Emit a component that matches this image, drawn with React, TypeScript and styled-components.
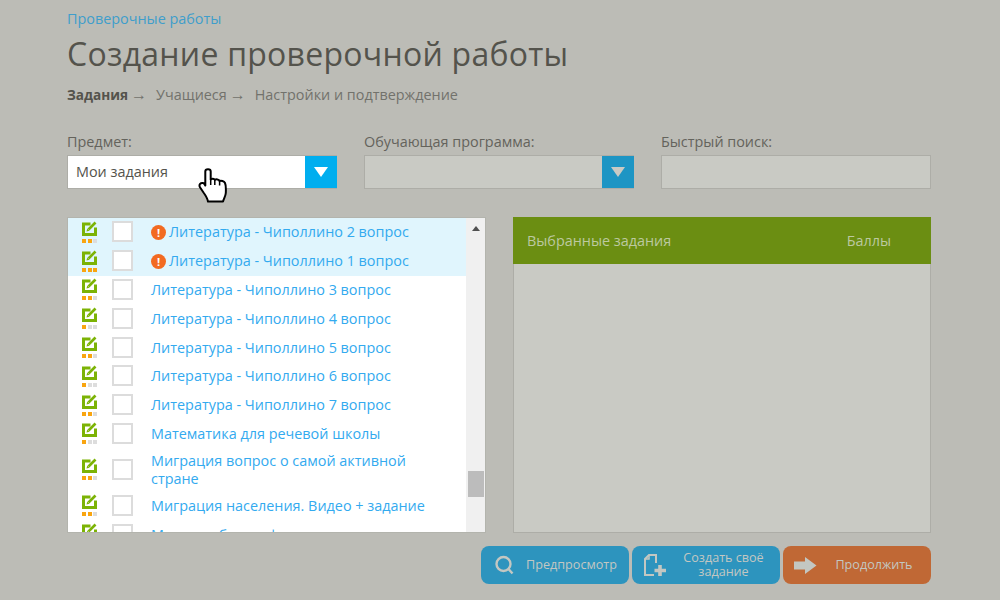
import React from 'react'
import styled, { createGlobalStyle } from 'styled-components'

const GlobalStyle = createGlobalStyle`
  html, body {
    margin: 0;
    padding: 0;
    background: #bcbcb6;
    font-family: 'Open Sans', 'Noto Sans', sans-serif;
  }
`

const Page = styled.div`
  position: relative;
  box-sizing: border-box;
  width: 1000px;
  height: 600px;
  overflow: hidden;
  padding: 9px 69px 0 67px;
  background: #bcbcb6;
`

const Crumb = styled.a`
  display: block;
  height: 20px;
  font-size: 14.4px;
  line-height: 20px;
  color: #3f9ecb;
`

const Title = styled.h1`
  margin: 4px 0 0;
  font-size: 32px;
  font-weight: 400;
  line-height: 42px;
  letter-spacing: 0.25px;
  color: #54534c;
`

const Steps = styled.div`
  display: flex;
  margin-top: 10px;
  font-size: 14.4px;
  line-height: 20px;
  color: #72726c;
`

const Step = styled.span<{ $active?: boolean }>`
  margin-right: 9px;
  font-size: ${props => (props.$active ? 13.6 : 14.4)}px;
  font-weight: ${props => (props.$active ? 700 : 400)};
  color: ${props => (props.$active ? '#54534c' : '#72726c')};
`

const Arrow = styled.span`
  margin-left: 3px;
  font-family: 'Liberation Sans', sans-serif;
  font-size: 16px;
  font-weight: 400;
  color: #72726c;
`

const Filters = styled.div`
  display: grid;
  grid-template-columns: 270px 270px 270px;
  column-gap: 27px;
  margin-top: 29px;
`

const Label = styled.label`
  display: block;
  height: 21px;
  font-size: 14.4px;
  line-height: 16px;
  color: #64635c;
`

const Select = styled.div<{ $active?: boolean }>`
  box-sizing: border-box;
  display: flex;
  align-items: stretch;
  height: 34px;
  border: 1px solid #adada7;
  background: ${props => (props.$active ? '#fff' : '#c9cac4')};
`

const SelectValue = styled.div`
  flex: 1;
  padding-left: 8px;
  font-size: 14.4px;
  line-height: 32px;
  color: #54534c;
`

const SelectButton = styled.div<{ $active?: boolean }>`
  display: flex;
  align-items: center;
  justify-content: center;
  width: 32px;
  margin-right: -1px;
  background: ${props => (props.$active ? '#00aeef' : '#1d95c4')};
`

const Triangle = styled.div<{ $active?: boolean }>`
  width: 0;
  height: 0;
  border-left: 7.5px solid transparent;
  border-right: 7.5px solid transparent;
  border-top: 10px solid ${props => (props.$active ? '#fff' : '#c9cac4')};
`

const SearchInput = styled.div`
  box-sizing: border-box;
  height: 34px;
  border: 1px solid #adada7;
  background: #c9cac4;
`

const Columns = styled.div`
  display: flex;
  justify-content: space-between;
  margin-top: 28px;
`

const ListPanel = styled.div`
  box-sizing: border-box;
  display: flex;
  width: 419px;
  height: 316px;
  border: 1px solid #b3b4ad;
  background: #fff;
`

const List = styled.ul`
  flex: 1;
  height: 100%;
  margin: 0;
  padding: 0;
  overflow: hidden;
  list-style: none;
`

const Row = styled.li<{ $warn?: boolean; $tall?: boolean }>`
  display: flex;
  align-items: center;
  height: ${props => (props.$tall ? 43.2 : 28.8)}px;
  background: ${props => (props.$warn ? '#e0f5fd' : '#fff')};
`

const TaskMark = styled.div`
  display: flex;
  flex-direction: column;
  align-items: center;
  gap: 3px;
  width: 15px;
  margin: 0 0 1px 14px;
`

const Dots = styled.div`
  display: flex;
  gap: 1.5px;
`

const Dot = styled.span<{ $on: boolean }>`
  width: 4px;
  height: 4px;
  background: ${props => (props.$on ? '#f9a510' : '#dddddd')};
`

const Checkbox = styled.div`
  box-sizing: border-box;
  flex: none;
  width: 21px;
  height: 21px;
  margin: 0 0 1px 15px;
  border: 2px solid #dcdcdc;
  background: #fff;
`

const TaskText = styled.a`
  display: flex;
  align-items: center;
  margin-left: 18px;
  padding-right: 20px;
  font-size: 14.4px;
  line-height: 18px;
  color: #33aaef;
`

const WarnIcon = styled.span`
  flex: none;
  display: flex;
  align-items: center;
  justify-content: center;
  width: 15px;
  height: 15px;
  margin-right: 3px;
  border-radius: 50%;
  background: #f26a21;
  color: #fff;
  font-size: 11px;
  font-weight: 700;
  line-height: 15px;
`

const Track = styled.div`
  flex: none;
  display: flex;
  flex-direction: column;
  align-items: center;
  width: 19px;
  background: #f0f0f0;
`

const TrackArrow = styled.div`
  width: 0;
  height: 0;
  margin-top: 8px;
  border-left: 4.5px solid transparent;
  border-right: 4.5px solid transparent;
  border-bottom: 5px solid #505050;
`

const Thumb = styled.div`
  width: 16px;
  height: 26px;
  margin-top: 240px;
  background: #bcbcbc;
`

const ChosenPanel = styled.div`
  box-sizing: border-box;
  width: 418px;
  height: 316px;
  border: 1px solid #adada7;
  border-top: 0;
  background: #c9cac4;
`

const ChosenHead = styled.div`
  display: flex;
  justify-content: space-between;
  height: 47px;
  margin: 0 -1px;
  padding: 0 40px 0 14px;
  background: #6b8e12;
  font-size: 14.4px;
  line-height: 47px;
  color: #bcc9a0;
`

const Actions = styled.div`
  display: flex;
  justify-content: flex-end;
  gap: 3px;
  margin-top: 13px;
`

const ActionButton = styled.button<{ $orange?: boolean }>`
  display: flex;
  align-items: center;
  box-sizing: border-box;
  width: 148px;
  height: 38px;
  padding: 0;
  border: 0;
  border-radius: 8px;
  background: ${props => (props.$orange ? '#c06835' : '#2d94be')};
  color: #c3c7c2;
  font-family: inherit;
  font-size: 12.6px;
  line-height: 14px;
  text-align: center;
`

const ActionIcon = styled.svg<{ $inset: number }>`
  flex: none;
  margin-left: ${props => props.$inset}px;
`

const ActionLabel = styled.span`
  flex: 1;
`

const Cursor = styled.svg`
  position: absolute;
  left: 198px;
  top: 168px;
`

const tasks = [
  { title: 'Литература - Чиполлино 2 вопрос', dots: 2, warn: true },
  { title: 'Литература - Чиполлино 1 вопрос', dots: 3, warn: true },
  { title: 'Литература - Чиполлино 3 вопрос', dots: 2 },
  { title: 'Литература - Чиполлино 4 вопрос', dots: 1 },
  { title: 'Литература - Чиполлино 5 вопрос', dots: 2 },
  { title: 'Литература - Чиполлино 6 вопрос', dots: 1 },
  { title: 'Литература - Чиполлино 7 вопрос', dots: 2 },
  { title: 'Математика для речевой школы', dots: 1 },
  { title: 'Миграция вопрос о самой активной стране', dots: 2, tall: true },
  { title: 'Миграция населения. Видео + задание', dots: 2 },
  { title: 'Мировая биография', dots: 2 },
]

const EditIcon = () => (
  <svg width="15" height="15" viewBox="0 0 15 15">
    <path d="M0 1.5 H8.5 V4.5 H3 V12 H12 V6.5 H15 V15 H0 Z" fill="#7cb305" />
    <path d="M6.5 8.5 L13.5 1.5" stroke="#7cb305" strokeWidth="2.6" />
    <path d="M4.5 10.5 L5.3 7.5 L7.5 9.7 Z" fill="#7cb305" />
  </svg>
)

const App = () => (
  <Page>
    <GlobalStyle />
    <Crumb>Проверочные работы</Crumb>
    <Title>Создание проверочной работы</Title>
    <Steps>
      <Step $active>
        Задания<Arrow>→</Arrow>
      </Step>
      <Step>
        Учащиеся<Arrow>→</Arrow>
      </Step>
      <Step>Настройки и подтверждение</Step>
    </Steps>
    <Filters>
      <div>
        <Label>Предмет:</Label>
        <Select $active>
          <SelectValue>Мои задания</SelectValue>
          <SelectButton $active>
            <Triangle $active />
          </SelectButton>
        </Select>
      </div>
      <div>
        <Label>Обучающая программа:</Label>
        <Select>
          <SelectValue />
          <SelectButton>
            <Triangle />
          </SelectButton>
        </Select>
      </div>
      <div>
        <Label>Быстрый поиск:</Label>
        <SearchInput />
      </div>
    </Filters>
    <Columns>
      <ListPanel>
        <List>
          {tasks.map(task => (
            <Row key={task.title} $warn={task.warn} $tall={task.tall}>
              <TaskMark>
                <EditIcon />
                <Dots>
                  {[1, 2, 3].map(n => (
                    <Dot key={n} $on={n <= task.dots} />
                  ))}
                </Dots>
              </TaskMark>
              <Checkbox />
              <TaskText>
                {task.warn && <WarnIcon>!</WarnIcon>}
                <span>{task.title}</span>
              </TaskText>
            </Row>
          ))}
        </List>
        <Track>
          <TrackArrow />
          <Thumb />
        </Track>
      </ListPanel>
      <ChosenPanel>
        <ChosenHead>
          <span>Выбранные задания</span>
          <span>Баллы</span>
        </ChosenHead>
      </ChosenPanel>
    </Columns>
    <Actions>
      <ActionButton>
        <ActionIcon $inset={13} width="20" height="20" viewBox="0 0 20 20" fill="none" stroke="#c3c7c2" strokeWidth="2.4">
          <circle cx="9.5" cy="9" r="7" />
          <path d="M14.5 14 L18.5 18.5" />
        </ActionIcon>
        <ActionLabel>Предпросмотр</ActionLabel>
      </ActionButton>
      <ActionButton>
        <ActionIcon $inset={11} width="24" height="24" viewBox="0 0 24 24" fill="none" stroke="#c3c7c2" strokeWidth="2">
          <path d="M11 22 H2 V6 L6 2 H13 V10" />
          <path d="M6 2 V6 H2" strokeWidth="1.5" />
          <path d="M17 12 V23 M11.5 17.5 H23" strokeWidth="3.6" />
        </ActionIcon>
        <ActionLabel>
          Создать своё
          <br />
          задание
        </ActionLabel>
      </ActionButton>
      <ActionButton $orange>
        <ActionIcon $inset={11} width="23" height="17" viewBox="0 0 23 17">
          <path d="M0 4.5 H11 V0 L22.5 8.5 L11 17 V12.5 H0 Z" fill="#c3c7c2" />
        </ActionIcon>
        <ActionLabel>Продолжить</ActionLabel>
      </ActionButton>
    </Actions>
    <Cursor width="30" height="36" viewBox="-1 -1 30 36">
      <path
        d="M6.3 2.5 C6.3 -0.5 11.7 -0.5 11.7 2.5 V10.5 C13 9.5 15 9.5 15.8 10.8 C17 10 19.8 10.2 20.6 12 C22 11.5 25 12 26 14 C27 16 27 20 26.8 24 C26.6 27 25 29 24 32.5 H9 C8.5 29.5 7 27 4.5 23.5 L0.8 18 C-0.2 15.5 1.5 13.5 4 14 C5 14.3 5.8 15.5 6.3 16.5 Z"
        fill="#fff"
        stroke="#000"
        strokeWidth="2"
        strokeLinejoin="round"
      />
      <path d="M11.7 10 V16 M15.8 11 V16 M20.6 12 V16.5" stroke="#000" strokeWidth="1.5" />
    </Cursor>
  </Page>
)

export default App
